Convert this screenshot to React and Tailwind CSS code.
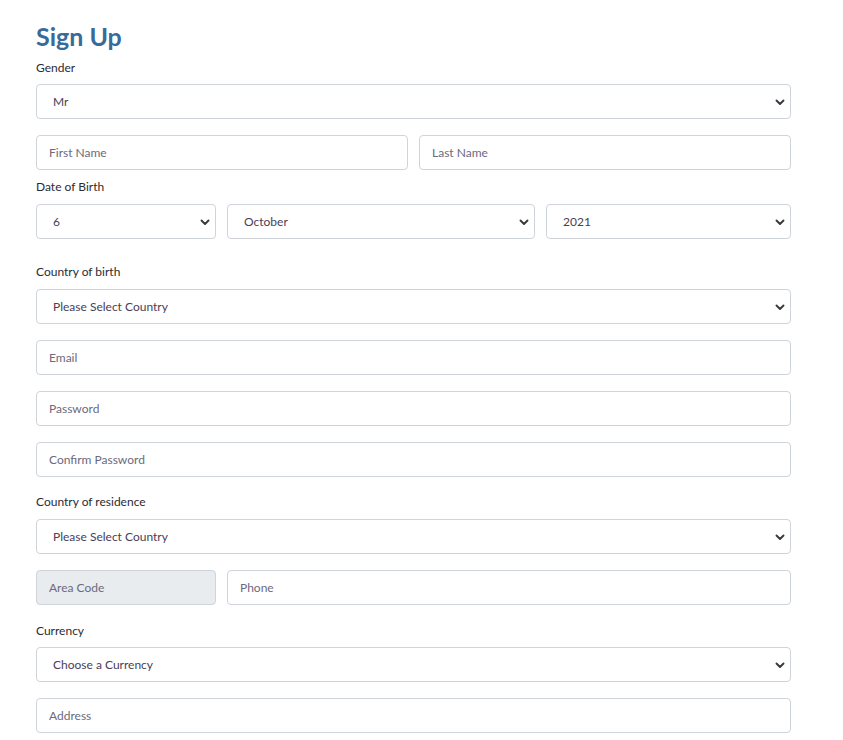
import React from "react";

const Chevron = () => (
  <svg className="absolute right-[5px] top-1/2 -translate-y-1/2" width="10" height="10" viewBox="0 0 10 10" fill="none">
    <path d="M1.5 3.5L5 7l3.5-3.5" stroke="#343a40" strokeWidth="1.9" strokeLinecap="round" strokeLinejoin="round" />
  </svg>
);

const Select = ({ value, className = "" }) => (
  <div className={`relative h-[35px] border border-[#ced4da] rounded-[4px] bg-white flex items-center pl-4 text-[12px] text-[#4a3d58] ${className}`}>
    <span>{value}</span>
    <Chevron />
  </div>
);

const Input = ({ placeholder, className = "", disabled }) => (
  <input
    disabled={disabled}
    placeholder={placeholder}
    className={`h-[35px] border border-[#ced4da] rounded-[4px] px-3 text-[12px] outline-none placeholder:text-[#6b6a7e] ${disabled ? "bg-[#e9ecef]" : "bg-white"} ${className}`}
    style={{ fontFamily: "inherit" }}
  />
);

const Label = ({ children, className = "" }) => (
  <div className={`text-[12px] leading-[18px] text-[#2b2b33] ${className}`}>{children}</div>
);

export default function App() {
  return (
    <div className="w-[843px] h-[740px] bg-white overflow-hidden" style={{ fontFamily: "Lato, 'Noto Sans', sans-serif" }}>
      <div className="ml-[36px] w-[755px] pt-[20px] flex flex-col">
        <h1 className="text-[25px] leading-[32px] font-bold text-[#386b99]">Sign Up</h1>
        <Label className="mt-[7px]">Gender</Label>
        <Select value="Mr" className="mt-[7px]" />
        <div className="mt-4 flex gap-[11px]">
          <Input placeholder="First Name" className="flex-1 min-w-0" />
          <Input placeholder="Last Name" className="flex-1 min-w-0" />
        </div>
        <Label className="mt-2">Date of Birth</Label>
        <div className="mt-2 flex gap-[11px]">
          <Select value="6" className="w-[180px]" />
          <Select value="October" className="w-[308px]" />
          <Select value="2021" className="flex-1" />
        </div>
        <Label className="mt-[24px]">Country of birth</Label>
        <Select value="Please Select Country" className="mt-2" />
        <Input placeholder="Email" className="mt-4" />
        <Input placeholder="Password" className="mt-4" />
        <Input placeholder="Confirm Password" className="mt-4" />
        <Label className="mt-4">Country of residence</Label>
        <Select value="Please Select Country" className="mt-2" />
        <div className="mt-4 flex gap-[11px]">
          <Input placeholder="Area Code" disabled className="w-[180px]" />
          <Input placeholder="Phone" className="flex-1 min-w-0" />
        </div>
        <Label className="mt-[17px]">Currency</Label>
        <Select value="Choose a Currency" className="mt-[7px]" />
        <Input placeholder="Address" className="mt-4" />
      </div>
    </div>
  );
}
